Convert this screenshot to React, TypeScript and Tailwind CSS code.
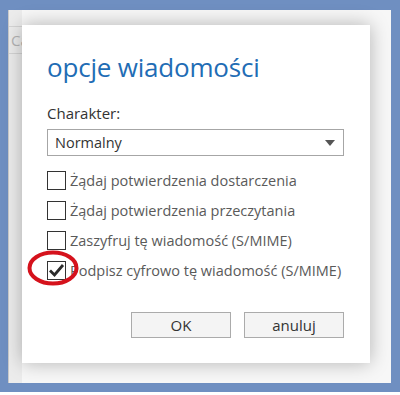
const options = [
  { label: 'Żądaj potwierdzenia dostarczenia', checked: false },
  { label: 'Żądaj potwierdzenia przeczytania', checked: false },
  { label: 'Zaszyfruj tę wiadomość (S/MIME)', checked: false },
  { label: 'Podpisz cyfrowo tę wiadomość (S/MIME)', checked: true },
]

function Checkbox({ checked }: { checked: boolean }) {
  return (
    <div className="w-[19px] h-[19px] border border-[#333] bg-white flex items-center justify-center shrink-0">
      {checked && (
        <svg width="17" height="15" viewBox="0 0 17 15">
          <path d="M2 7.5 L6.5 12 L15 2" fill="none" stroke="#2b2b2b" strokeWidth="2.8" strokeLinejoin="miter" />
        </svg>
      )}
    </div>
  )
}

export default function App() {
  return (
    <div className="w-[400px] h-[395px] bg-white font-['Open_Sans','Noto_Sans',sans-serif]">
      <div className="w-[400px] h-[392px] border-[#6f8fc1] border-t-[10px] border-l-[8px] border-r-[9px] border-b-[9px] bg-[#f7f7f7] flex">
        {/* app behind the dialog */}
        <div className="w-[14px] h-full bg-[#ececec] border-l border-[#c9c9c9] overflow-hidden">
          <div className="mt-[16px] h-[28px] border-y border-[#d4d4d4] text-[15px] leading-[26px] text-[#b5b5b5] pl-[2px] whitespace-nowrap">Ca</div>
        </div>

        <div className="mt-[15px] w-[348px] h-[338px] bg-white shadow-[0_0_18px_rgba(0,0,0,0.28)] pl-[25px] pr-[26px] relative z-10">
          <h1 className="mt-[26px] text-[26px] leading-[32px] text-[#1f6db5] font-normal tracking-[-0.2px]">
            opcje wiadomości
          </h1>

          <div className="mt-[20px] text-[15px] leading-[20px] text-[#333]">Charakter:</div>

          <div className="mt-[6px] h-[27px] border border-[#a6a6a6] flex items-center justify-between pl-[7px] pr-[8px] text-[14.5px] text-[#333]">
            <span>Normalny</span>
            <svg width="10" height="6" viewBox="0 0 10 6">
              <path d="M0 0 L10 0 L5 6 Z" fill="#555" />
            </svg>
          </div>

          <div className="mt-[15px] flex flex-col gap-[11px]">
            {options.map((o) => (
              <div key={o.label} className="relative flex items-center gap-[4px] h-[19px] text-[14.5px] text-[#5a5a5a]">
                <Checkbox checked={o.checked} />
                <span>{o.label}</span>
                {o.checked && (
                  <svg className="absolute left-[-20px] top-[-11px]" width="52" height="36" viewBox="0 0 52 36">
                    <ellipse cx="26" cy="18" rx="23.5" ry="15.5" fill="none" stroke="#d5121c" strokeWidth="4" />
                  </svg>
                )}
              </div>
            ))}
          </div>

          <div className="mt-[32px] flex justify-end gap-[13px]">
            <button className="w-[100px] h-[26px] bg-[#f4f4f4] border border-[#ababab] text-[15px] text-[#333]">OK</button>
            <button className="w-[100px] h-[26px] bg-[#f4f4f4] border border-[#ababab] text-[15px] text-[#333]">anuluj</button>
          </div>
        </div>
      </div>
    </div>
  )
}
